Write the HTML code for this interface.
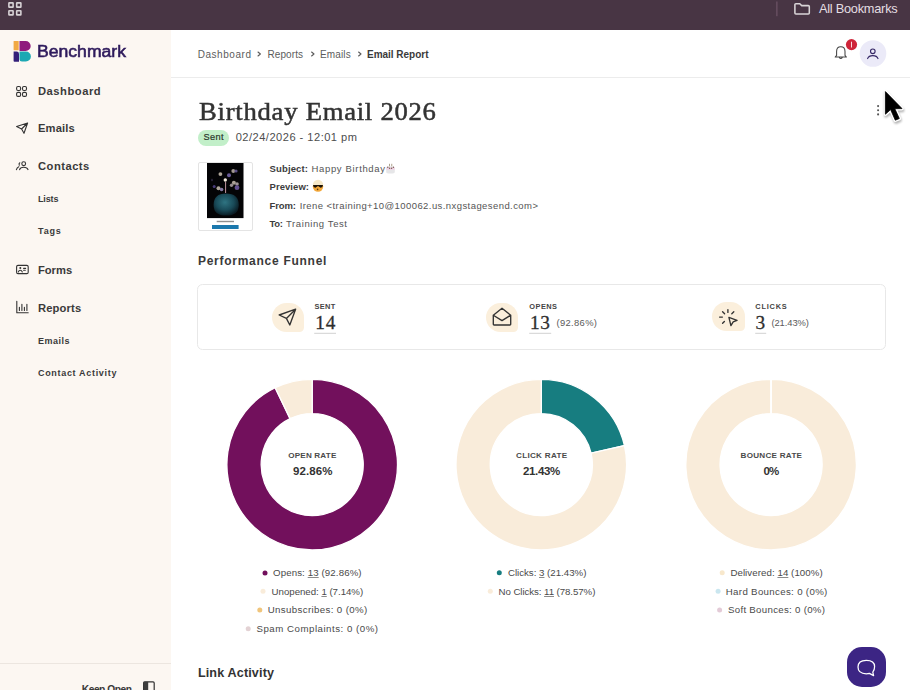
<!DOCTYPE html>
<html><head><meta charset="utf-8">
<style>
*{margin:0;padding:0;box-sizing:border-box}
html,body{width:910px;height:690px;overflow:hidden;background:#fff;font-family:"Liberation Sans",sans-serif;color:#333}
.a{position:absolute}
.t{position:absolute;white-space:nowrap;line-height:1}
.t u{text-decoration:underline;text-decoration-thickness:1px;text-underline-offset:0.6px;text-decoration-color:#8a8a8a}
svg{position:absolute;overflow:visible}
</style></head>
<body>
<!-- backgrounds -->
<div class="a" style="left:0;top:0;width:910px;height:29.5px;background:#483544"></div>
<div class="a" style="left:0;top:29.5px;width:171px;height:661px;background:#fcf7f2"></div>
<div class="a" style="left:0;top:662.7px;width:171px;height:1px;background:#ece6e0"></div>
<div class="a" style="left:171px;top:77px;width:739px;height:1px;background:#ececec"></div>

<!-- top bar icons -->
<svg style="left:0;top:0" width="910" height="30" viewBox="0 0 910 30">
  <g fill="none" stroke="#d6d1d4" stroke-width="1.6">
    <rect x="8.9" y="2.9" width="4.2" height="4.2" rx="0.4"/>
    <rect x="16.7" y="2.9" width="4.2" height="4.2" rx="0.4"/>
    <rect x="8.9" y="10.7" width="4.2" height="4.2" rx="0.4"/>
    <rect x="16.7" y="10.7" width="4.2" height="4.2" rx="0.4"/>
  </g>
  <rect x="776.4" y="1.5" width="1" height="14.7" fill="#765a6e"/>
  <path d="M794.9 4.6 Q794.9 3.7 795.9 3.7 H799.8 L801.7 5.6 H808.3 Q809.3 5.6 809.3 6.6 V12.9 Q809.3 13.9 808.3 13.9 H795.9 Q794.9 13.9 794.9 12.9 Z" fill="none" stroke="#d9d5d7" stroke-width="1.55" stroke-linejoin="round"/>
</svg>

<!-- logo -->
<svg style="left:0;top:0" width="40" height="70" viewBox="0 0 40 70">
  <rect x="13.6" y="40.9" width="5.1" height="9.4" rx="0.6" fill="#f1a944"/>
  <path d="M19.5 40.9 H25.6 A5.1 5.05 0 0 1 25.6 51 H19.5 Z" fill="#8f1a7d"/>
  <path d="M13.6 51.4 H16.6 A2.4 2.4 0 0 1 19 53.8 V61.7 H14.4 Q13.6 61.7 13.6 60.9 Z" fill="#34207a"/>
  <path d="M19.5 51.6 H25.9 A5 4.95 0 0 1 25.9 61.5 H22 A2.5 2.5 0 0 1 19.5 59 Z" fill="#1ca8b3"/>
</svg>

<!-- nav icons -->
<svg style="left:0;top:0" width="40" height="330" viewBox="0 0 40 330">
  <g fill="none" stroke="#333" stroke-width="1.1" stroke-linejoin="round" stroke-linecap="round">
    <rect x="16.6" y="86.5" width="4" height="4" rx="1.4"/>
    <rect x="22.5" y="86.5" width="4" height="4" rx="1.4"/>
    <rect x="16.6" y="92.4" width="4" height="4" rx="1.4"/>
    <rect x="22.5" y="92.4" width="4" height="4" rx="1.4"/>
    <path d="M27.6 123 L16.6 126.5 L21.6 129 L24 133.3 Z M27.6 123 L21.6 129"/>
    <circle cx="23.7" cy="163.7" r="1.9"/>
    <path d="M19.6 169.6 Q20.2 167.2 23.7 167.2 Q27.2 167.2 28 169.6"/>
    <path d="M19.8 162.8 Q18.6 163.4 19.3 165.3 M16.4 169.6 Q17 167.5 18.8 166.8"/>
    <rect x="16.6" y="265.4" width="11.6" height="8.2" rx="1.4"/>
    <path d="M18.3 272 Q19 270.3 20.3 270.3 Q21.6 270.3 22.3 272 M23.6 268.4 H25.6 M23.6 270.3 H25.3"/>
    <circle cx="20.3" cy="268" r="1" fill="#333" stroke="none"/>
    <path d="M16.8 301.3 V312.7 H28.2"/>
    <path d="M19.4 307.2 V310.5 M21.9 304.3 V310.5 M24.4 307.2 V310.5 M26.9 304.3 V310.5"/>
  </g>
</svg>

<!-- keep open icon -->
<svg style="left:0;top:0" width="170" height="690" viewBox="0 0 170 690">
  <rect x="143.6" y="681.8" width="10.6" height="12" rx="1.2" fill="none" stroke="#333" stroke-width="1.2"/>
  <rect x="143.6" y="681.8" width="4.6" height="12" fill="#3d3d3d"/>
</svg>

<!-- header icons -->
<svg style="left:0;top:0" width="910" height="130" viewBox="0 0 910 130">
  <path d="M835.2 57 H846.4 L845 55.4 V51.5 Q845 46.8 840.8 46.8 Q836.6 46.8 836.6 51.5 V55.4 Z M839.2 57.4 Q840.8 59.6 842.4 57.4" fill="none" stroke="#444" stroke-width="1.05" stroke-linejoin="round"/>
  <circle cx="851.5" cy="44.6" r="5.6" fill="#cf2539"/>
  <rect x="851" y="41.7" width="1" height="5.8" fill="#f8dde0"/>
  <circle cx="873" cy="53.5" r="13.3" fill="#ebeaf8"/>
  <circle cx="872.8" cy="51.3" r="2.3" fill="none" stroke="#352766" stroke-width="1.1"/>
  <path d="M867.6 58.6 Q868.6 55.6 872.8 55.6 Q877 55.6 878 58.6" fill="none" stroke="#352766" stroke-width="1.1" stroke-linecap="round"/>
  <circle cx="878.1" cy="106.1" r="1.05" fill="#555"/>
  <circle cx="878.1" cy="110.3" r="1.05" fill="#555"/>
  <circle cx="878.1" cy="114.4" r="1.05" fill="#555"/>
</svg>

<!-- breadcrumb chevrons -->
<svg style="left:0;top:0" width="910" height="80" viewBox="0 0 910 80">
  <g fill="none" stroke="#5a5a5a" stroke-width="1.1" stroke-linecap="round" stroke-linejoin="round">
    <path d="M258 52 L260.4 54 L258 56"/>
    <path d="M311.6 52 L314 54 L311.6 56"/>
    <path d="M358.6 52 L361 54 L358.6 56"/>
  </g>
</svg>
<!-- sent badge -->
<div class="a" style="left:197.7px;top:129.6px;width:31.6px;height:16.1px;border-radius:8px;background:#c2efc9"></div>

<!-- thumbnail -->
<div class="a" style="left:197.5px;top:162.2px;width:55.2px;height:69.2px;border:1px solid #e4e4e4;border-radius:2px;background:#fff"></div>
<svg style="left:0;top:0" width="260" height="240" viewBox="0 0 260 240">
  <defs>
    <radialGradient id="cup" cx="0.45" cy="0.4" r="0.6">
      <stop offset="0" stop-color="#2f7482"/><stop offset="0.6" stop-color="#194a58"/><stop offset="1" stop-color="#0a1c24"/>
    </radialGradient>
    <filter id="bk" x="-1" y="-1" width="3" height="3"><feGaussianBlur stdDeviation="0.5"/></filter>
  </defs>
  <rect x="207" y="163" width="36.5" height="55.1" fill="#040406"/>
  <g filter="url(#bk)" opacity="0.75">
    <circle cx="220.4" cy="174.1" r="1.9" fill="#e8dcc8"/>
    <circle cx="229" cy="175.3" r="2" fill="#8a78c8"/>
    <circle cx="233.3" cy="171" r="1.9" fill="#d8ccc0"/>
    <circle cx="236" cy="171" r="1.6" fill="#7868b0"/>
    <circle cx="233.9" cy="182.7" r="2" fill="#e0d4c8"/>
    <circle cx="237" cy="184" r="1.8" fill="#d0c4c8"/>
    <circle cx="218.5" cy="188.3" r="2" fill="#e8dccc"/>
    <circle cx="221.6" cy="189.5" r="1.8" fill="#b0a0d8"/>
    <circle cx="214.2" cy="186.4" r="1.5" fill="#6050a0"/>
    <circle cx="237" cy="187.7" r="2.4" fill="#8068c0"/>
    <circle cx="231.5" cy="185.2" r="1.7" fill="#c8bcc0"/>
    <circle cx="212" cy="180" r="1.2" fill="#302840"/>
  </g>
  <circle cx="225.3" cy="180" r="1.7" fill="#f4ecdc"/>
  <rect x="225" y="182" width="1.1" height="11" fill="#b08890"/>
  <path d="M213.6 205 Q213.6 193.5 226 193.5 Q238.8 193.5 238.8 205 Q238.8 215.6 226 215.6 Q213.6 215.6 213.6 205 Z" fill="url(#cup)"/>
  <rect x="216.7" y="220.8" width="17.3" height="1.4" fill="#333" opacity="0.55"/>
  <rect x="212" y="225" width="26.6" height="4" fill="#1b78ad"/>
</svg>

<!-- emojis -->
<svg style="left:0;top:0" width="400" height="200" viewBox="0 0 400 200">
  <path d="M386.2 168 Q386.2 166.3 390.5 166.3 Q394.8 166.3 394.8 168 V172 Q394.8 173.6 390.5 173.6 Q386.2 173.6 386.2 172 Z" fill="#e6e6e8"/>
  <rect x="386.4" y="167.5" width="8.2" height="2.2" fill="#f0d2e6"/>
  <circle cx="387.8" cy="167.3" r="0.7" fill="#7a5a50"/><circle cx="389.6" cy="168.3" r="0.7" fill="#7a5a50"/>
  <circle cx="391.6" cy="168.3" r="0.7" fill="#7a5a50"/><circle cx="393.4" cy="167.3" r="0.7" fill="#7a5a50"/>
  <rect x="389.2" y="163.8" width="0.8" height="2.5" fill="#9a8a70"/><rect x="391.4" y="163.8" width="0.8" height="2.5" fill="#9a8a70"/>
  <circle cx="318" cy="186.5" r="5.2" fill="#f3a83a"/>
  <path d="M312.8 185 A5.2 5.2 0 0 1 323.2 185 Z" fill="#f6e9c9"/>
  <path d="M313 185 H323 Q322.8 188 320.2 187.6 L318 186 L315.8 187.6 Q313.2 188 313 185 Z" fill="#1c1408"/>
  <circle cx="317.6" cy="189.4" r="0.8" fill="#5a3a10"/>
</svg>

<!-- funnel card -->
<div class="a" style="left:197.4px;top:284.4px;width:689.1px;height:65.2px;border:1px solid #e8e8e8;border-radius:5.5px"></div>
<div class="a" style="left:271.6px;top:302.5px;width:32.1px;height:29px;border-radius:16px 16px 5px 16px;background:#fbefdc"></div>
<div class="a" style="left:485.8px;top:302.7px;width:32.5px;height:28.9px;border-radius:16px 16px 5px 16px;background:#fbefdc"></div>
<div class="a" style="left:712.4px;top:302.4px;width:32.3px;height:29px;border-radius:16px 16px 5px 16px;background:#fbefdc"></div>
<svg style="left:0;top:0" width="910" height="360" viewBox="0 0 910 360">
  <g fill="none" stroke="#333" stroke-width="1.35" stroke-linejoin="round" stroke-linecap="round">
    <path d="M295.6 309.2 L279.2 315 L286.4 318.4 L289.8 325 Z M295.6 309.2 L286.4 318.4"/>
    <path d="M493.3 315.2 L502 308.2 L510.7 315.2 V324.2 Q510.7 325 509.9 325 H494.1 Q493.3 325 493.3 324.2 Z M493.3 315.2 L502 320.6 L510.7 315.2"/>
    <path d="M727.9 309.6 V312.4 M719.6 317.1 H722.4 M722.6 311.8 L724.6 313.8 M733.8 311.8 L731.8 313.8 M722.6 323.2 L724.4 321.4"/>
    <path d="M728.9 317.4 L737 320.4 L733.2 321.9 L730.9 325.6 Z"/>
</g>
  <g fill="#d2d2d2">
    <rect x="314.2" y="332.8" width="21.8" height="1"/>
    <rect x="529.2" y="332.8" width="22" height="1"/>
    <rect x="755.2" y="332.8" width="11" height="1"/>
  </g>
</svg>

<!-- donuts -->
<svg style="left:0;top:0" width="910" height="560" viewBox="0 0 910 560" id="donuts">
<path d="M312.200 379.300 A85.3 85.3 0 1 1 275.190 387.747 L290.050 418.606 A51.05 51.05 0 1 0 312.200 413.550 Z" fill="#72105c" stroke="#fff" stroke-width="1.3" stroke-linejoin="miter"/>
<path d="M275.190 387.747 A85.3 85.3 0 0 1 312.200 379.300 L312.200 413.550 A51.05 51.05 0 0 0 290.050 418.606 Z" fill="#f9ecda" stroke="#fff" stroke-width="1.3" stroke-linejoin="miter"/>
<path d="M541.300 379.300 A85.3 85.3 0 0 1 624.461 445.619 L591.070 453.240 A51.05 51.05 0 0 0 541.300 413.550 Z" fill="#177d80" stroke="#fff" stroke-width="1.3" stroke-linejoin="miter"/>
<path d="M624.461 445.619 A85.3 85.3 0 1 1 541.300 379.300 L541.300 413.550 A51.05 51.05 0 1 0 591.070 453.240 Z" fill="#f9ecda" stroke="#fff" stroke-width="1.3" stroke-linejoin="miter"/>
<path d="M771.115 379.300 A85.3 85.3 0 1 1 771.085 379.300 L771.091 413.550 A51.05 51.05 0 1 0 771.109 413.550 Z" fill="#f9ecda" stroke="#fff" stroke-width="1.3" stroke-linejoin="miter"/>
<line x1="771.1" y1="378.3" x2="771.1" y2="414.55" stroke="#fff" stroke-width="1.8"/>
</svg>

<!-- legend dots -->
<svg style="left:0;top:0" width="910" height="690" viewBox="0 0 910 690">
  <circle cx="265" cy="573" r="2.5" fill="#72105c"/>
  <circle cx="263" cy="591.3" r="2.5" fill="#f9ecda"/>
  <circle cx="259.8" cy="610" r="2.5" fill="#f0c57c"/>
  <circle cx="248.2" cy="628.7" r="2.5" fill="#e3d2d4"/>
  <circle cx="499.3" cy="572.7" r="2.5" fill="#177d80"/>
  <circle cx="490.3" cy="591.3" r="2.5" fill="#f9ecda"/>
  <circle cx="722.2" cy="572.8" r="2.5" fill="#f8e8cc"/>
  <circle cx="718.1" cy="591.2" r="2.5" fill="#cae6ef"/>
  <circle cx="719.6" cy="610" r="2.5" fill="#e3cbd7"/>
</svg>

<!-- chat button -->
<div class="a" style="left:846.7px;top:647.2px;width:39.7px;height:40px;border-radius:15px;background:#3c2584"></div>
<svg style="left:0;top:0" width="910" height="690" viewBox="0 0 910 690">
  <path d="M866.3 660.4 Q874.6 660.4 874.6 666.6 Q874.6 670.2 872.8 672.2 L873.6 675.6 L869.4 673.4 Q868 673.8 866.3 673.8 Q858 673.8 858 667.1 Q858 660.4 866.3 660.4 Z" fill="none" stroke="#fff" stroke-width="1.25" stroke-linejoin="round"/>
</svg>

<div class="t" id="t0" style="left:818.90px;top:2.86px;font-size:12.8px;font-weight:400;font-family:'Liberation Sans', sans-serif;color:#e4dee2;letter-spacing:-0.249px;">All Bookmarks</div>
<div class="t" id="t1" style="left:37.00px;top:43.86px;font-size:16px;font-weight:400;font-family:'Liberation Sans', sans-serif;color:#2e1a5c;transform:scaleX(1.0999);transform-origin:0 0;-webkit-text-stroke:0.55px #2e1a5c;">Benchmark</div>
<div class="t" id="t2" style="left:38.00px;top:86.42px;font-size:11.2px;font-weight:700;font-family:'Liberation Sans', sans-serif;color:#3a3a3a;letter-spacing:0.533px;">Dashboard</div>
<div class="t" id="t3" style="left:38.00px;top:123.22px;font-size:11.2px;font-weight:700;font-family:'Liberation Sans', sans-serif;color:#3a3a3a;letter-spacing:0.146px;">Emails</div>
<div class="t" id="t4" style="left:38.00px;top:161.32px;font-size:11.2px;font-weight:700;font-family:'Liberation Sans', sans-serif;color:#3a3a3a;letter-spacing:0.490px;">Contacts</div>
<div class="t" id="t5" style="left:38.00px;top:195.28px;font-size:9.0px;font-weight:700;font-family:'Liberation Sans', sans-serif;color:#3a3a3a;letter-spacing:-0.130px;">Lists</div>
<div class="t" id="t6" style="left:38.00px;top:226.88px;font-size:9.0px;font-weight:700;font-family:'Liberation Sans', sans-serif;color:#3a3a3a;letter-spacing:0.817px;">Tags</div>
<div class="t" id="t7" style="left:38.00px;top:265.32px;font-size:11.2px;font-weight:700;font-family:'Liberation Sans', sans-serif;color:#3a3a3a;letter-spacing:-0.023px;">Forms</div>
<div class="t" id="t8" style="left:38.00px;top:302.52px;font-size:11.2px;font-weight:700;font-family:'Liberation Sans', sans-serif;color:#3a3a3a;letter-spacing:0.155px;">Reports</div>
<div class="t" id="t9" style="left:38.00px;top:336.98px;font-size:9.0px;font-weight:700;font-family:'Liberation Sans', sans-serif;color:#3a3a3a;letter-spacing:0.496px;">Emails</div>
<div class="t" id="t10" style="left:38.00px;top:368.98px;font-size:9.0px;font-weight:700;font-family:'Liberation Sans', sans-serif;color:#3a3a3a;letter-spacing:0.681px;">Contact Activity</div>
<div class="t" id="t11" style="left:81.80px;top:684.57px;font-size:10.2px;font-weight:700;font-family:'Liberation Sans', sans-serif;color:#3a3a3a;letter-spacing:-0.460px;">Keep Open</div>
<div class="t" id="t12" style="left:197.70px;top:49.94px;font-size:10px;font-weight:400;font-family:'Liberation Sans', sans-serif;color:#5c5c5c;letter-spacing:0.546px;">Dashboard</div>
<div class="t" id="t13" style="left:267.50px;top:49.94px;font-size:10px;font-weight:400;font-family:'Liberation Sans', sans-serif;color:#5c5c5c;letter-spacing:0.079px;">Reports</div>
<div class="t" id="t14" style="left:320.00px;top:49.94px;font-size:10px;font-weight:400;font-family:'Liberation Sans', sans-serif;color:#5c5c5c;letter-spacing:0.139px;">Emails</div>
<div class="t" id="t15" style="left:367.00px;top:49.94px;font-size:10px;font-weight:700;font-family:'Liberation Sans', sans-serif;color:#3a3a3a;letter-spacing:-0.017px;">Email Report</div>
<div class="t" id="t16" style="left:198.60px;top:98.86px;font-size:25.0px;font-weight:400;font-family:'Liberation Serif', serif;color:#333333;transform:scaleX(1.0659);transform-origin:0 0;-webkit-text-stroke:0.5px #333;letter-spacing:0.7px;">Birthday Email 2026</div>
<div class="t" id="t17" style="left:203.50px;top:133.11px;font-size:9.2px;font-weight:400;font-family:'Liberation Sans', sans-serif;color:#2a352c;letter-spacing:0.397px;-webkit-text-stroke:0.2px #2a352c;">Sent</div>
<div class="t" id="t18" style="left:235.70px;top:132.40px;font-size:11.1px;font-weight:400;font-family:'Liberation Sans', sans-serif;color:#4d4d4d;letter-spacing:0.483px;">02/24/2026 - 12:01 pm</div>
<div class="t" id="t19" style="left:269.50px;top:163.66px;font-size:9.5px;font-weight:700;font-family:'Liberation Sans', sans-serif;color:#3d3d3d;letter-spacing:0.146px;">Subject:</div>
<div class="t" id="t20" style="left:311.50px;top:163.66px;font-size:9.5px;font-weight:400;font-family:'Liberation Sans', sans-serif;color:#555555;letter-spacing:0.658px;">Happy Birthday</div>
<div class="t" id="t21" style="left:269.50px;top:182.26px;font-size:9.5px;font-weight:700;font-family:'Liberation Sans', sans-serif;color:#3d3d3d;letter-spacing:0.060px;">Preview:</div>
<div class="t" id="t22" style="left:269.50px;top:200.86px;font-size:9.5px;font-weight:700;font-family:'Liberation Sans', sans-serif;color:#3d3d3d;letter-spacing:-0.104px;">From:</div>
<div class="t" id="t23" style="left:299.70px;top:200.86px;font-size:9.5px;font-weight:400;font-family:'Liberation Sans', sans-serif;color:#555555;letter-spacing:0.427px;">Irene &lt;training+10@100062.us.nxgstagesend.com&gt;</div>
<div class="t" id="t24" style="left:269.50px;top:219.36px;font-size:9.5px;font-weight:700;font-family:'Liberation Sans', sans-serif;color:#3d3d3d;letter-spacing:-0.285px;">To:</div>
<div class="t" id="t25" style="left:286.00px;top:219.36px;font-size:9.5px;font-weight:400;font-family:'Liberation Sans', sans-serif;color:#555555;letter-spacing:0.594px;">Training Test</div>
<div class="t" id="t26" style="left:197.90px;top:255.24px;font-size:12.0px;font-weight:700;font-family:'Liberation Sans', sans-serif;color:#3a3a3a;letter-spacing:0.733px;">Performance Funnel</div>
<div class="t" id="t27" style="left:314.40px;top:302.84px;font-size:7.4px;font-weight:700;font-family:'Liberation Sans', sans-serif;color:#444444;letter-spacing:0.393px;">SENT</div>
<div class="t" id="t28" style="left:529.30px;top:302.94px;font-size:7.4px;font-weight:700;font-family:'Liberation Sans', sans-serif;color:#444444;letter-spacing:0.456px;">OPENS</div>
<div class="t" id="t29" style="left:755.30px;top:302.64px;font-size:7.4px;font-weight:700;font-family:'Liberation Sans', sans-serif;color:#444444;letter-spacing:0.778px;">CLICKS</div>
<div class="t" id="t30" style="left:315.30px;top:313.44px;font-size:19.3px;font-weight:400;font-family:'Liberation Serif', serif;color:#2e2e2e;letter-spacing:0.703px;-webkit-text-stroke:0.3px #2e2e2e;">14</div>
<div class="t" id="t31" style="left:530.00px;top:313.44px;font-size:19.3px;font-weight:400;font-family:'Liberation Serif', serif;color:#2e2e2e;letter-spacing:0.703px;-webkit-text-stroke:0.3px #2e2e2e;">13</div>
<div class="t" id="t32" style="left:755.60px;top:313.44px;font-size:19.3px;font-weight:400;font-family:'Liberation Serif', serif;color:#2e2e2e;-webkit-text-stroke:0.3px #2e2e2e;">3</div>
<div class="t" id="t33" style="left:556.40px;top:317.74px;font-size:9.4px;font-weight:400;font-family:'Liberation Sans', sans-serif;color:#5a5a5a;letter-spacing:0.364px;">(92.86%)</div>
<div class="t" id="t34" style="left:771.40px;top:317.74px;font-size:9.4px;font-weight:400;font-family:'Liberation Sans', sans-serif;color:#5a5a5a;letter-spacing:-0.063px;">(21.43%)</div>
<div class="t" id="t35" style="left:288.30px;top:451.84px;font-size:8.1px;font-weight:700;font-family:'Liberation Sans', sans-serif;color:#4a4a4a;letter-spacing:0.172px;">OPEN RATE</div>
<div class="t" id="t36" style="left:293.00px;top:465.97px;font-size:11.5px;font-weight:700;font-family:'Liberation Sans', sans-serif;color:#333;letter-spacing:0.078px;">92.86%</div>
<div class="t" id="t37" style="left:516.10px;top:451.84px;font-size:8.1px;font-weight:700;font-family:'Liberation Sans', sans-serif;color:#4a4a4a;letter-spacing:0.287px;">CLICK RATE</div>
<div class="t" id="t38" style="left:523.00px;top:465.97px;font-size:11.5px;font-weight:700;font-family:'Liberation Sans', sans-serif;color:#333;letter-spacing:-0.361px;">21.43%</div>
<div class="t" id="t39" style="left:740.60px;top:451.84px;font-size:8.1px;font-weight:700;font-family:'Liberation Sans', sans-serif;color:#4a4a4a;letter-spacing:0.264px;">BOUNCE RATE</div>
<div class="t" id="t40" style="left:763.50px;top:465.97px;font-size:11.5px;font-weight:700;font-family:'Liberation Sans', sans-serif;color:#333;letter-spacing:-0.931px;">0%</div>
<div class="t" id="t41" style="left:273.00px;top:568.39px;font-size:9.7px;font-weight:400;font-family:'Liberation Sans', sans-serif;color:#4a4a4a;letter-spacing:0.111px;">Opens: <u>13</u> (92.86%)</div>
<div class="t" id="t42" style="left:271.60px;top:586.79px;font-size:9.7px;font-weight:400;font-family:'Liberation Sans', sans-serif;color:#4a4a4a;letter-spacing:-0.030px;">Unopened: <u>1</u> (7.14%)</div>
<div class="t" id="t43" style="left:267.70px;top:605.19px;font-size:9.7px;font-weight:400;font-family:'Liberation Sans', sans-serif;color:#4a4a4a;letter-spacing:0.362px;">Unsubscribes: 0 (0%)</div>
<div class="t" id="t44" style="left:256.50px;top:623.59px;font-size:9.7px;font-weight:400;font-family:'Liberation Sans', sans-serif;color:#4a4a4a;letter-spacing:0.505px;">Spam Complaints: 0 (0%)</div>
<div class="t" id="t45" style="left:197.90px;top:667.03px;font-size:12.6px;font-weight:700;font-family:'Liberation Sans', sans-serif;color:#333;letter-spacing:0.140px;">Link Activity</div>
<div class="t" id="t46" style="left:507.90px;top:568.19px;font-size:9.7px;font-weight:400;font-family:'Liberation Sans', sans-serif;color:#4a4a4a;letter-spacing:-0.008px;">Clicks: <u>3</u> (21.43%)</div>
<div class="t" id="t47" style="left:498.60px;top:586.79px;font-size:9.7px;font-weight:400;font-family:'Liberation Sans', sans-serif;color:#4a4a4a;letter-spacing:-0.075px;">No Clicks: <u>11</u> (78.57%)</div>
<div class="t" id="t48" style="left:730.40px;top:568.19px;font-size:9.7px;font-weight:400;font-family:'Liberation Sans', sans-serif;color:#4a4a4a;letter-spacing:0.066px;">Delivered: <u>14</u> (100%)</div>
<div class="t" id="t49" style="left:725.80px;top:586.79px;font-size:9.7px;font-weight:400;font-family:'Liberation Sans', sans-serif;color:#4a4a4a;letter-spacing:0.326px;">Hard Bounces: 0 (0%)</div>
<div class="t" id="t50" style="left:728.00px;top:605.19px;font-size:9.7px;font-weight:400;font-family:'Liberation Sans', sans-serif;color:#4a4a4a;letter-spacing:0.287px;">Soft Bounces: 0 (0%)</div>

<!-- cursor -->
<svg style="left:0;top:0" width="910" height="690" viewBox="0 0 910 690">
  <defs><filter id="sh" x="-50%" y="-50%" width="200%" height="200%"><feGaussianBlur stdDeviation="1.3"/></filter></defs>
  <path d="M885.4 91.6 L885.4 114.2 L890.6 109.6 L895.3 120.2 L899.3 118.5 L894.8 108.7 L902 108.6 Z" fill="#000" stroke="#000" stroke-width="3.6" stroke-linejoin="round" opacity="0.3" filter="url(#sh)" transform="translate(0.6,1.8)"/>
  <path d="M885.4 91.6 L885.4 114.2 L890.6 109.6 L895.3 120.2 L899.3 118.5 L894.8 108.7 L902 108.6 Z" fill="#fff" stroke="#fff" stroke-width="3.6" stroke-linejoin="round"/>
  <path d="M885.4 91.6 L885.4 114.2 L890.6 109.6 L895.3 120.2 L899.3 118.5 L894.8 108.7 L902 108.6 Z" fill="#000" stroke="#000" stroke-width="0.8" stroke-linejoin="round"/>
</svg>
</body></html>
